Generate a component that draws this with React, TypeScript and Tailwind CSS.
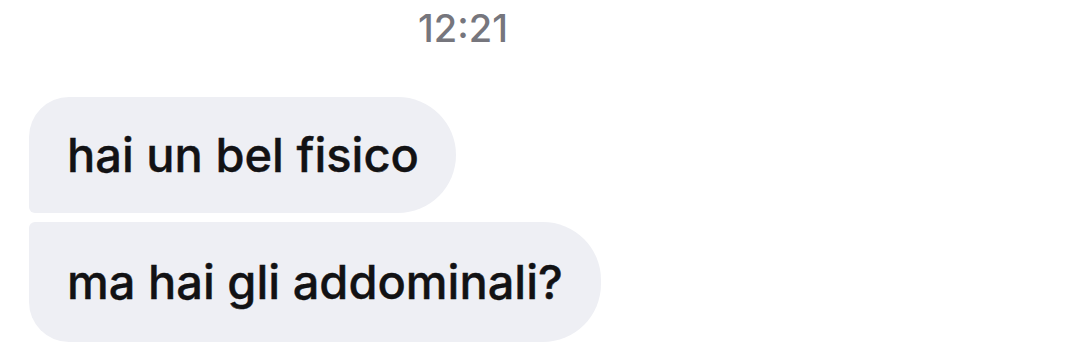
export default function App() {
  return (
    <main
      className="w-[1068px] h-[364px] bg-white flex flex-col pt-[6px]"
      style={{ fontFamily: "Inter, 'Noto Sans', sans-serif" }}
    >
      <div className="pl-[418px] text-[38px] leading-[44px] font-medium text-[#76767d]">12:21</div>
      <div className="mt-[47px] pl-[29px] flex flex-col items-start gap-[9px]">
        <div className="h-[116px] pl-[38px] pr-[37px] flex items-center bg-[#eeeff4] rounded-tl-[40px] rounded-tr-[58px] rounded-br-[58px] rounded-bl-[6px] text-[47px] font-medium text-[#121214] [-webkit-text-stroke:0.4px_#121214]">
          hai un bel fisico
        </div>
        <div className="h-[120px] pl-[38px] pr-[38px] flex items-center bg-[#eeeff4] rounded-tl-[6px] rounded-tr-[58px] rounded-br-[58px] rounded-bl-[40px] text-[47px] font-medium text-[#121214] [-webkit-text-stroke:0.4px_#121214]">
          ma hai gli addominali?
        </div>
      </div>
    </main>
  );
}
